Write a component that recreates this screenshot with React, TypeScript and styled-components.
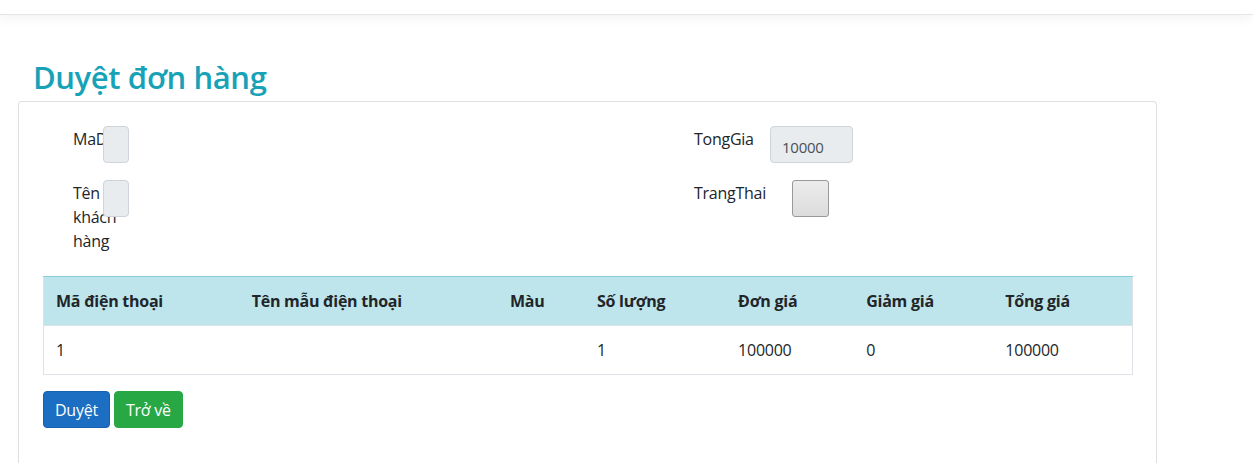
import React from "react";
import styled, { createGlobalStyle } from "styled-components";

const FONT = `"Open Sans", "Noto Sans", "Liberation Sans", sans-serif`;

const Global = createGlobalStyle`
  html, body { margin: 0; padding: 0; background: #fff; }
  body {
    font-family: ${FONT};
    font-size: 16px;
    line-height: 1.5;
    color: #212529;
    letter-spacing: -0.25px;
  }
  * { box-sizing: border-box; }
`;

const TopBar = styled.header`
  height: 15px;
  background: #fff;
  border-bottom: 1px solid #e5e5e5;
  box-shadow: 0 .25rem .75rem rgba(0, 0, 0, .05);
`;

const Main = styled.main`
  padding: 0 96px 0 18px;
`;

const Title = styled.h2`
  margin: 44px 0 0 15px;
  font-size: 31px;
  font-weight: 600;
  letter-spacing: -0.4px;
  line-height: 1.2;
  color: #17a2b8;
  height: 42px;
`;

const Card = styled.section`
  border: 1px solid #dfdfdf;
  border-bottom: none;
  border-radius: 4px 4px 0 0;
  padding: 24px 24px 40px 24px;
  min-height: 380px;
`;

const FormGrid = styled.div`
  display: grid;
  grid-template-columns: 621px 1fr;
  padding-left: 30px;
`;

const Column = styled.div`
  display: flex;
  flex-direction: column;
  gap: 17px;
`;

const Group = styled.div<{ $labelWidth: number }>`
  display: grid;
  grid-template-columns: ${(p) => p.$labelWidth}px auto;
  align-items: start;
  justify-items: start;
`;

const Label = styled.label`
  padding-top: 1px;
  line-height: 24px;
  white-space: normal;
`;

const TinyInput = styled.div`
  width: 26px;
  height: 37px;
  background: #e9ecef;
  border: 1px solid #ced4da;
  border-radius: 4px;
`;

const ValueInput = styled.div`
  width: 83px;
  height: 37px;
  background: #e9ecef;
  border: 1px solid #ced4da;
  border-radius: 4px;
  padding: 8px 11px 0;
  font-size: 15px;
  line-height: 24px;
  color: #495057;
`;

const CheckBox = styled.div`
  margin-left: 22px;
  width: 37px;
  height: 37px;
  border: 1px solid #999;
  border-radius: 3px;
  background: linear-gradient(#ececec, #dcdcdc);
`;

const Table = styled.table`
  margin-top: 23px;
  width: 1090px;
  border-collapse: collapse;
  table-layout: fixed;
  border: 1px solid #dee2e6;
  border-top: none;
`;

const HeadRow = styled.tr`
  background: #bee5eb;
  border-top: 1px solid #86cfda;
`;

const Th = styled.th`
  text-align: left;
  font-weight: 700;
  padding: 12px 12px;
  height: 49px;
  line-height: 24px;
`;

const Td = styled.td`
  padding: 12px;
  height: 49px;
  line-height: 24px;
  border-top: 1px solid #dee2e6;
`;

const Actions = styled.div`
  margin-top: 16px;
  display: flex;
  gap: 4px;
`;

const Button = styled.button<{ $variant: "primary" | "success" }>`
  font-family: ${FONT};
  font-size: 16px;
  letter-spacing: -0.25px;
  line-height: 24px;
  height: 37px;
  padding: 6px 11px;
  border-radius: 4px;
  color: #fff;
  border: 1px solid ${(p) => (p.$variant === "primary" ? "#1861ac" : "#28a745")};
  background: ${(p) => (p.$variant === "primary" ? "#1b6ec2" : "#28a745")};
  cursor: pointer;
`;

const columns = [
  { title: "Mã điện thoại", width: 196 },
  { title: "Tên mẫu điện thoại", width: 258 },
  { title: "Màu", width: 87 },
  { title: "Số lượng", width: 141 },
  { title: "Đơn giá", width: 128 },
  { title: "Giảm giá", width: 139 },
  { title: "Tổng giá", width: 139 },
];

const row = ["1", "", "", "1", "100000", "0", "100000"];

export default function App() {
  return (
    <>
      <Global />
      <TopBar />
      <Main>
        <Title>Duyệt đơn hàng</Title>
        <Card>
          <FormGrid>
            <Column>
              <Group $labelWidth={30}>
                <Label>MaDH</Label>
                <TinyInput />
              </Group>
              <Group $labelWidth={30}>
                <Label>Tên khách hàng</Label>
                <TinyInput />
              </Group>
            </Column>
            <Column>
              <Group $labelWidth={76}>
                <Label>TongGia</Label>
                <ValueInput>10000</ValueInput>
              </Group>
              <Group $labelWidth={76}>
                <Label>TrangThai</Label>
                <CheckBox />
              </Group>
            </Column>
          </FormGrid>
          <Table>
            <colgroup>
              {columns.map((c) => (
                <col key={c.title} style={{ width: c.width }} />
              ))}
            </colgroup>
            <thead>
              <HeadRow>
                {columns.map((c) => (
                  <Th key={c.title}>{c.title}</Th>
                ))}
              </HeadRow>
            </thead>
            <tbody>
              <tr>
                {row.map((v, i) => (
                  <Td key={i}>{v}</Td>
                ))}
              </tr>
            </tbody>
          </Table>
          <Actions>
            <Button $variant="primary">Duyệt</Button>
            <Button $variant="success">Trở về</Button>
          </Actions>
        </Card>
      </Main>
    </>
  );
}
